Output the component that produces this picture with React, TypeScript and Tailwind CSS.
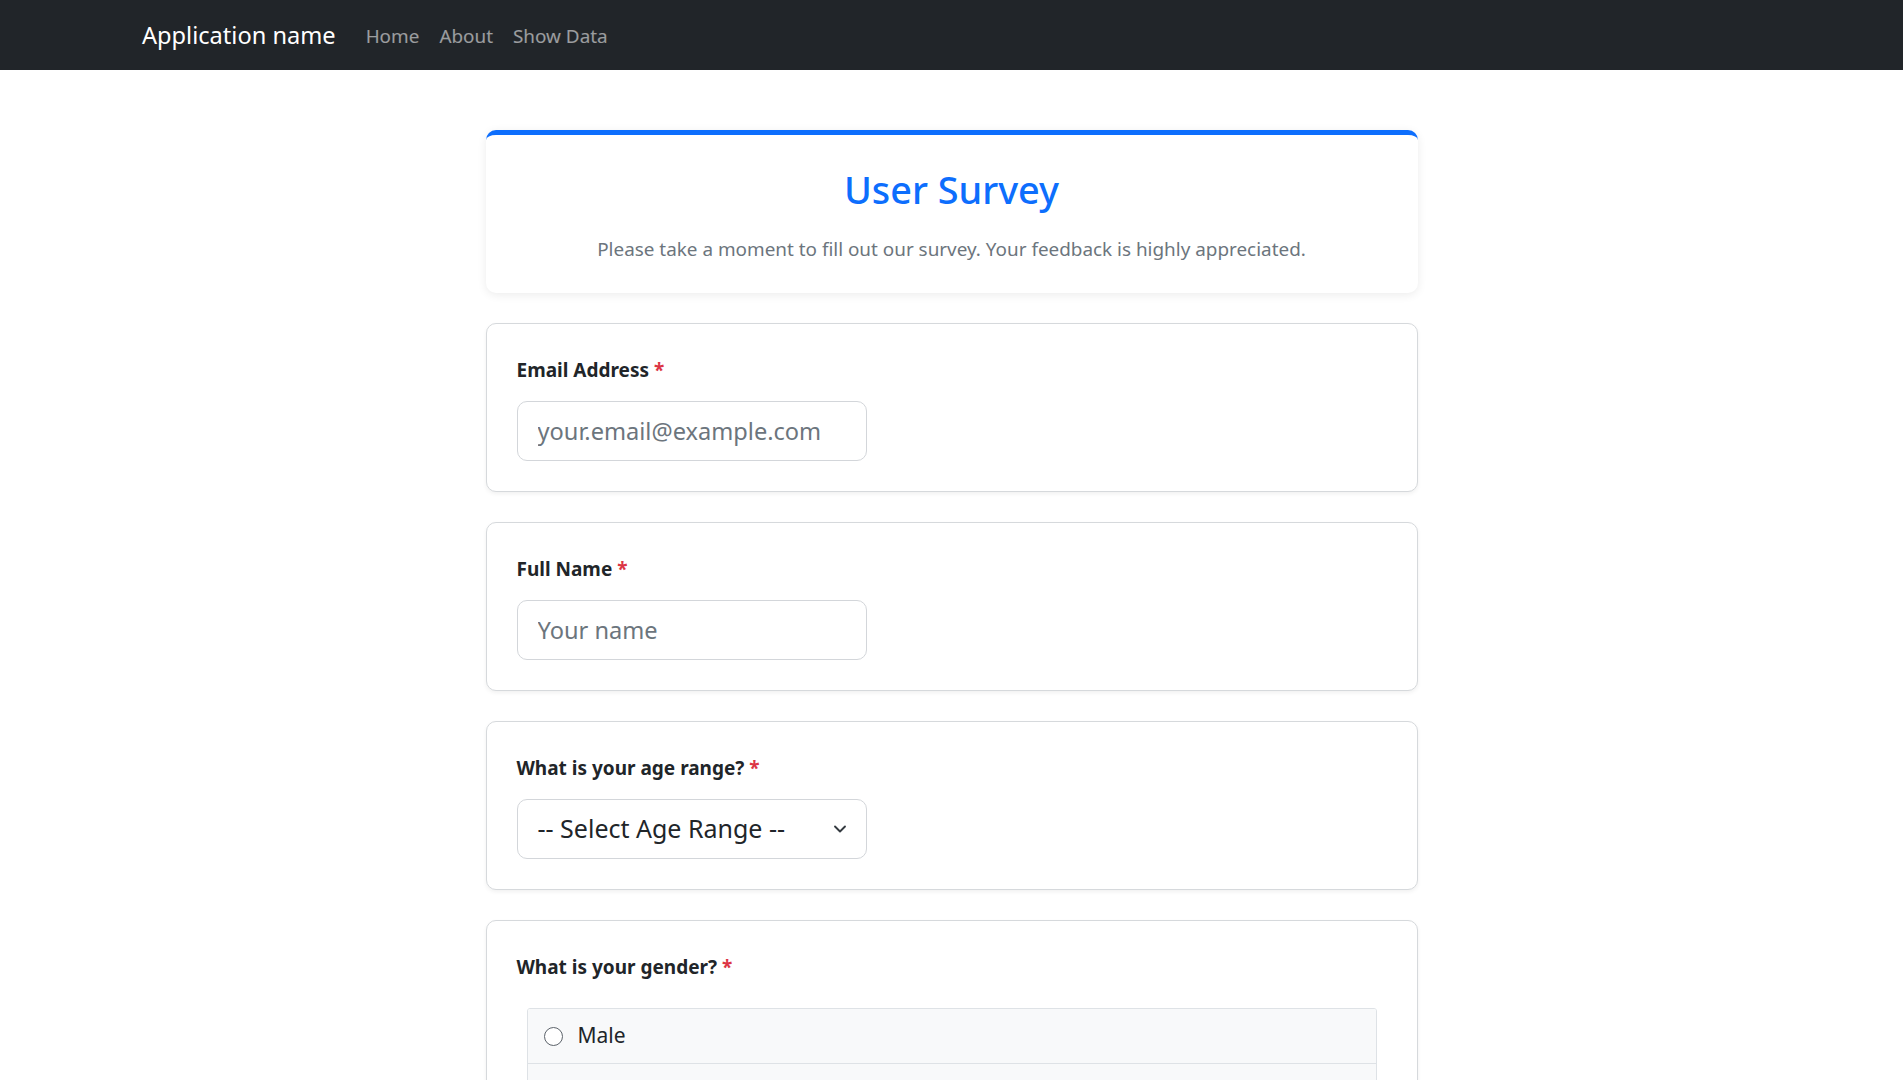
import { ChevronDown } from "lucide-react";

const font = { fontFamily: '"Noto Sans", "Open Sans", sans-serif' };

function Required() {
  return <span className="text-[#dc3545]"> *</span>;
}

function FieldCard({ label, children }: { label: string; children: React.ReactNode }) {
  return (
    <section className="rounded-[10px] border border-[#d6d9dc] bg-white px-[30px] pt-[31px] pb-[30px] shadow-[0_2px_4px_rgba(0,0,0,0.06)]">
      <label className="mb-[16px] block text-[19px] font-bold leading-[30px] text-[#212529]">
        {label}
        <Required />
      </label>
      {children}
    </section>
  );
}

const inputCls =
  "h-[60px] w-[350px] rounded-[10px] border border-[#d3d6da] px-[20px] text-[23.6px] text-[#212529] placeholder:text-[#6c757d] outline-none";

export default function App() {
  const genders = ["Male", "Female", "Other"];

  return (
    <div className="min-h-screen bg-white" style={font}>
      <nav className="h-[70px] bg-[#212529]">
        <div className="flex h-full items-center pl-[142px] pt-[2px]">
          <span className="mr-[20px] text-[23.6px] leading-none text-white">Application name</span>
          <div className="flex text-[18.9px] text-white/55">
            <a className="px-[10px]">Home</a>
            <a className="px-[10px]">About</a>
            <a className="px-[10px]">Show Data</a>
          </div>
        </div>
      </nav>

      <main className="mx-auto w-[932px] space-y-[30px] pt-[60px]">
        <header className="rounded-[10px] border-t-[5px] border-[#0d6efd] bg-white pt-[31px] pb-[29px] text-center shadow-[0_2px_10px_rgba(0,0,0,0.08)]">
          <h1 className="text-[37.8px] font-medium leading-[48px] text-[#0d6efd]">User Survey</h1>
          <p className="mt-[20px] text-[18.9px] leading-[30px] text-[#6c757d]">
            Please take a moment to fill out our survey. Your feedback is highly appreciated.
          </p>
        </header>

        <FieldCard label="Email Address">
          <input className={inputCls} placeholder="your.email@example.com" style={font} />
        </FieldCard>

        <FieldCard label="Full Name">
          <input className={inputCls} placeholder="Your name" style={font} />
        </FieldCard>

        <FieldCard label="What is your age range?">
          <div className="relative flex h-[60px] w-[350px] items-center rounded-[10px] border border-[#d3d6da] px-[20px] text-[25px] text-[#212529]">
            <span>-- Select Age Range --</span>
            <ChevronDown className="absolute right-[16px] h-[20px] w-[20px] text-[#343a40]" strokeWidth={2.25} />
          </div>
        </FieldCard>

        <section className="rounded-[10px] border border-[#d6d9dc] bg-white px-[30px] pt-[31px] pb-[30px] shadow-[0_2px_4px_rgba(0,0,0,0.06)]">
          <label className="block text-[19px] font-bold leading-[30px] text-[#212529]">
            What is your gender?
            <Required />
          </label>
          <div className="mx-[10px] mt-[26px] overflow-hidden rounded-[3px] border border-[#dee2e6]">
            {genders.map((g, i) => (
              <div
                key={g}
                className={`flex h-[54px] items-center gap-[15px] bg-[#f8f9fa] px-[16px] text-[21px] text-[#212529] ${i > 0 ? "border-t border-[#dee2e6]" : ""}`}
              >
                <span className="h-[19px] w-[19px] rounded-full border-[1.5px] border-[#5c636a] bg-white" />
                <span>{g}</span>
              </div>
            ))}
          </div>
        </section>
      </main>
    </div>
  );
}
